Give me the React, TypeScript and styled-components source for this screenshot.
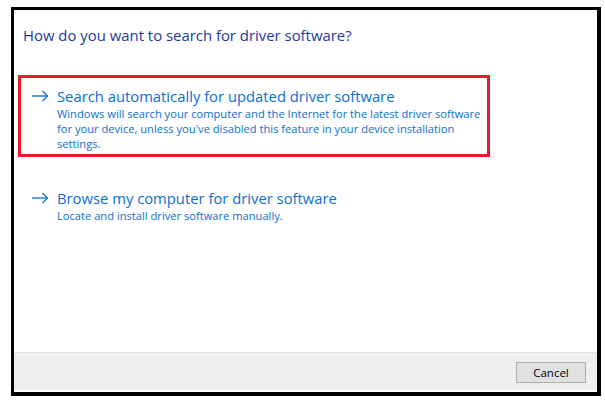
import styled, { createGlobalStyle } from "styled-components";

const GlobalStyle = createGlobalStyle`
  html, body {
    margin: 0;
    padding: 0;
    background: #ffffff;
  }
  body {
    font-family: "Open Sans", "Noto Sans", "Liberation Sans", sans-serif;
  }
`;

const Page = styled.div`
  width: 605px;
  height: 402px;
  padding: 7px 0 0 11px;
  box-sizing: border-box;
`;

const Dialog = styled.div`
  width: 590px;
  height: 389px;
  box-sizing: border-box;
  border-style: solid;
  border-color: #000000;
  border-width: 3px 4px 4px 3px;
  background: #ffffff;
  display: flex;
  flex-direction: column;
`;

const Content = styled.div`
  flex: 1;
  padding: 15px 0 0 4px;
  display: flex;
  flex-direction: column;
`;

const Title = styled.div`
  font-size: 14.9px;
  line-height: 20px;
  color: #1d3a98;
  padding-left: 5px;
  margin-bottom: 30px;
`;

const Option = styled.div<{ $selected?: boolean }>`
  width: 472px;
  box-sizing: border-box;
  border: 3px solid ${(p) => (p.$selected ? "#ea1c27" : "transparent")};
  padding: 8px 0 3px 10px;
  display: flex;
  gap: 8px;
  margin-bottom: 20px;
`;

const Arrow = styled.svg`
  flex: none;
  width: 18px;
  height: 12px;
  margin-top: 4px;
`;

const OptionText = styled.div`
  display: flex;
  flex-direction: column;
`;

const OptionTitle = styled.div`
  font-size: 14.8px;
  line-height: 20px;
  color: #0b6fd0;
  white-space: nowrap;
`;

const OptionDesc = styled.div`
  font-size: 11.15px;
  line-height: 15px;
  color: #0b6fd0;
  width: 430px;
`;

const Footer = styled.div`
  border-top: 1px solid #dfdfdf;
  background: #efefef;
  height: 38px;
  margin-bottom: 2px;
  box-sizing: border-box;
  display: flex;
  justify-content: flex-end;
  align-items: flex-start;
  padding: 9px 11px 0 0;
`;

const Button = styled.button`
  width: 70px;
  height: 21px;
  box-sizing: border-box;
  border: 1px solid #adadad;
  background: #e1e1e1;
  font-family: "Open Sans", "Noto Sans", "Liberation Sans", sans-serif;
  font-size: 11.5px;
  color: #000000;
  padding: 0;
  line-height: 18px;
`;

function ArrowIcon() {
  return (
    <Arrow viewBox="0 0 18 12" fill="none" stroke="#1a78d4" strokeWidth={1.4}>
      <path d="M1 6H16.5" />
      <path d="M11.5 1L16.5 6L11.5 11" />
    </Arrow>
  );
}

export default function App() {
  return (
    <>
      <GlobalStyle />
      <Page>
        <Dialog>
          <Content>
            <Title>How do you want to search for driver software?</Title>
            <Option $selected>
              <ArrowIcon />
              <OptionText>
                <OptionTitle>Search automatically for updated driver software</OptionTitle>
                <OptionDesc>
                  Windows will search your computer and the Internet for the latest driver software
                  for your device, unless you've disabled this feature in your device installation
                  settings.
                </OptionDesc>
              </OptionText>
            </Option>
            <Option>
              <ArrowIcon />
              <OptionText>
                <OptionTitle>Browse my computer for driver software</OptionTitle>
                <OptionDesc>Locate and install driver software manually.</OptionDesc>
              </OptionText>
            </Option>
          </Content>
          <Footer>
            <Button>Cancel</Button>
          </Footer>
        </Dialog>
      </Page>
    </>
  );
}
